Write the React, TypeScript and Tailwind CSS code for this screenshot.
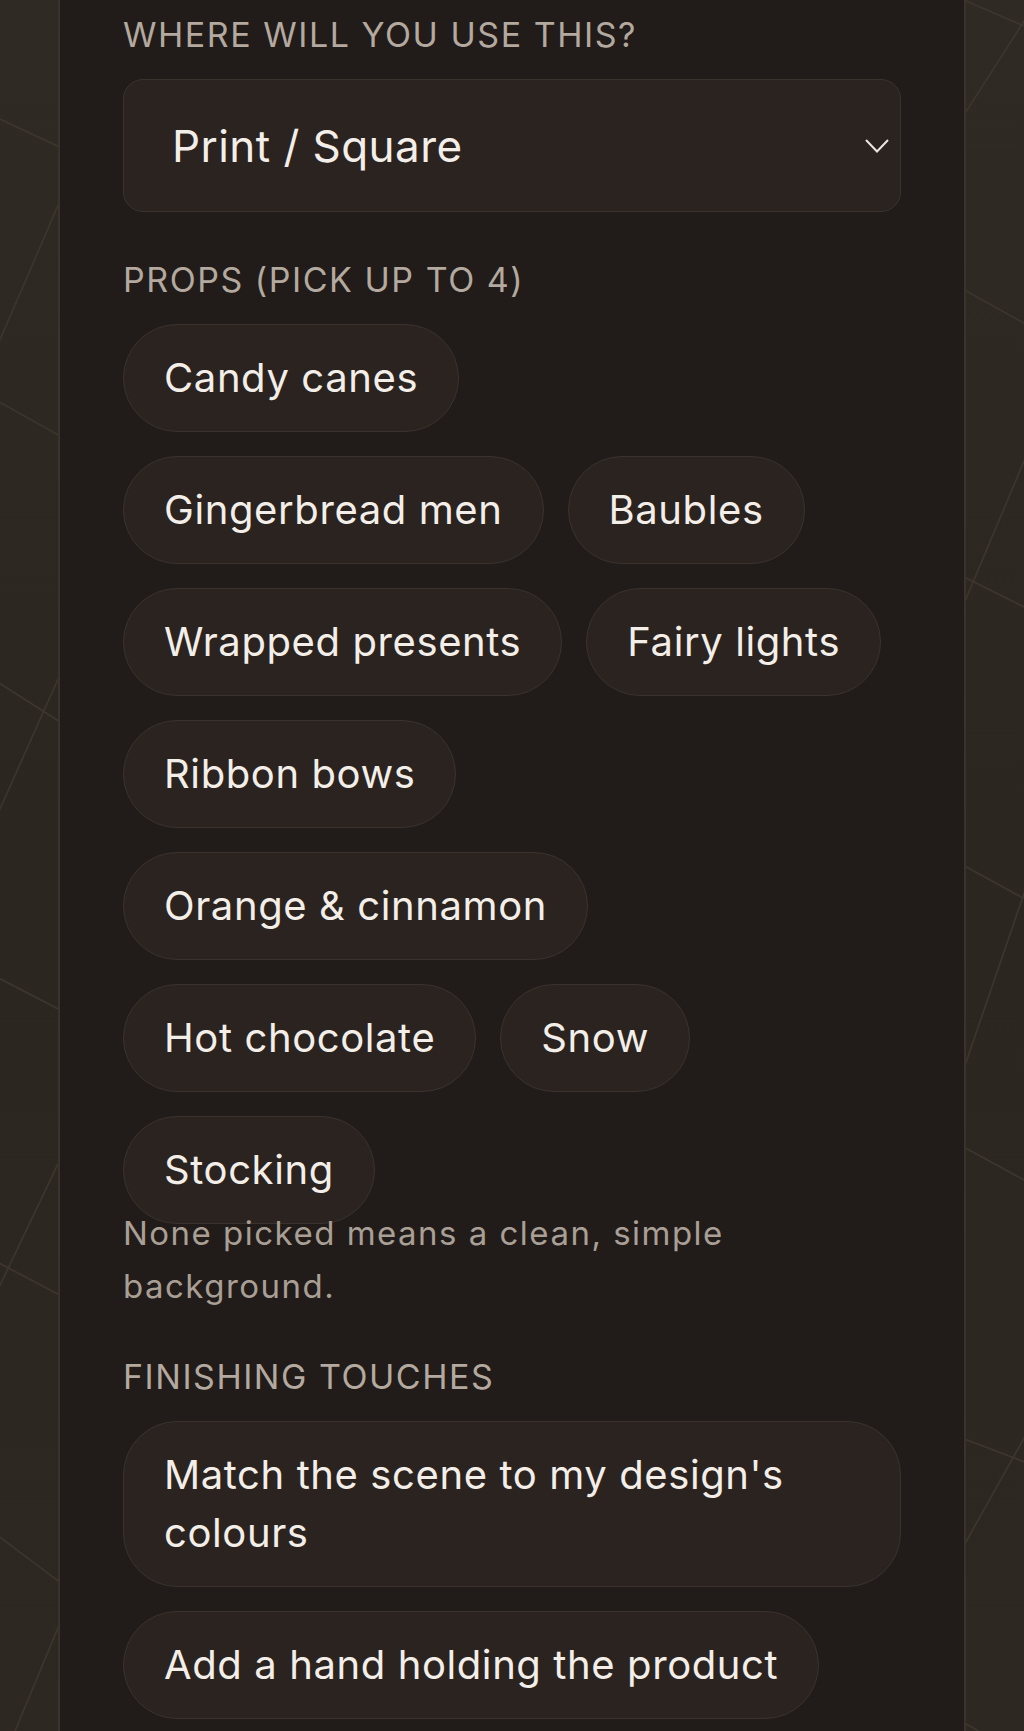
import React from "react";

const PROPS = [
  "Candy canes",
  "Gingerbread men",
  "Baubles",
  "Wrapped presents",
  "Fairy lights",
  "Ribbon bows",
  "Orange & cinnamon",
  "Hot chocolate",
  "Snow",
  "Stocking",
];

const TOUCHES = [
  "Match the scene to my design's colours",
  "Add a hand holding the product",
];

// faint diagonal strokes in the backdrop, [x1, y1, x2, y2]
const LINES: [number, number, number, number][] = [
  [-20, 108, 80, 154],
  [80, 152, -20, 380],
  [-20, 385, 80, 440],
  [80, 620, -20, 840],
  [-20, 660, 80, 723],
  [-20, 953, 80, 1004],
  [80, 1100, -20, 1306],
  [-20, 1233, 80, 1285],
  [-20, 1498, 80, 1572],
  [80, 1550, -20, 1786],
  [940, -10, 1044, 34],
  [1044, -10, 940, 150],
  [940, 272, 1044, 329],
  [1044, 407, 940, 650],
  [940, 556, 1044, 607],
  [940, 839, 1044, 895],
  [1044, 822, 940, 1120],
  [940, 1116, 1044, 1172],
  [940, 1407, 1044, 1446],
  [1044, 1380, 940, 1563],
  [940, 1682, 1044, 1740],
];

function Backdrop() {
  return (
    <svg
      className="pointer-events-none absolute inset-0 h-full w-full"
      viewBox="0 0 1024 1731"
      preserveAspectRatio="none"
    >
      {LINES.map(([x1, y1, x2, y2], i) => (
        <line key={i} x1={x1} y1={y1} x2={x2} y2={y2} stroke="#3e362e" strokeWidth={1.6} />
      ))}
    </svg>
  );
}

function Label({ children, className = "" }: { children: React.ReactNode; className?: string }) {
  return (
    <p className={`text-[34px] leading-[40px] tracking-[0.045em] uppercase text-[#b3a99f] ${className}`}>
      {children}
    </p>
  );
}

function Chip({ children }: { children: React.ReactNode }) {
  return (
    <button className="rounded-[54px] border border-[#3a322d] bg-[#2a2320] px-10 py-6 text-left text-[40px] leading-[58px] tracking-[0.015em] text-[#f3eee8]">
      {children}
    </button>
  );
}

function ChevronDown() {
  return (
    <svg width="24" height="14" viewBox="0 0 24 14" fill="none" className="shrink-0">
      <polyline points="1,1 12,12.5 23,1" stroke="#ece6de" strokeWidth="2" strokeLinejoin="miter" />
    </svg>
  );
}

export default function App() {
  return (
    <div className="relative flex min-h-screen w-full justify-center overflow-hidden bg-gradient-to-b from-[#302a24] via-[#2c2621] to-[#2e2822] font-[family-name:Inter,sans-serif]">
      <Backdrop />
      <div className="relative w-[908px] border-x-2 border-[#3a332d] bg-[#211c1a] px-[63px] pt-[15px] pb-10">
        <Label className="mb-6">Where will you use this?</Label>
        <div className="flex h-[133px] items-center justify-between rounded-[20px] border border-[#3a322d] bg-[#2b2320] pl-12 pr-[11px]">
          <span className="text-[44px] leading-none tracking-[0.01em] text-[#f3eee8]">Print / Square</span>
          <ChevronDown />
        </div>

        <Label className="mt-12 mb-6">Props (pick up to 4)</Label>
        <div className="flex flex-wrap gap-6">
          {PROPS.map((p) => (
            <Chip key={p}>{p}</Chip>
          ))}
        </div>
        <p className="mt-[-17px] w-[700px] text-[33px] leading-[53px] tracking-[0.045em] text-[#a99f95]">
          None picked means a clean, simple background.
        </p>

        <Label className="mt-[44px] mb-6">Finishing touches</Label>
        <div className="flex flex-col items-start gap-6">
          {TOUCHES.map((t) => (
            <Chip key={t}>{t}</Chip>
          ))}
        </div>
      </div>
    </div>
  );
}
